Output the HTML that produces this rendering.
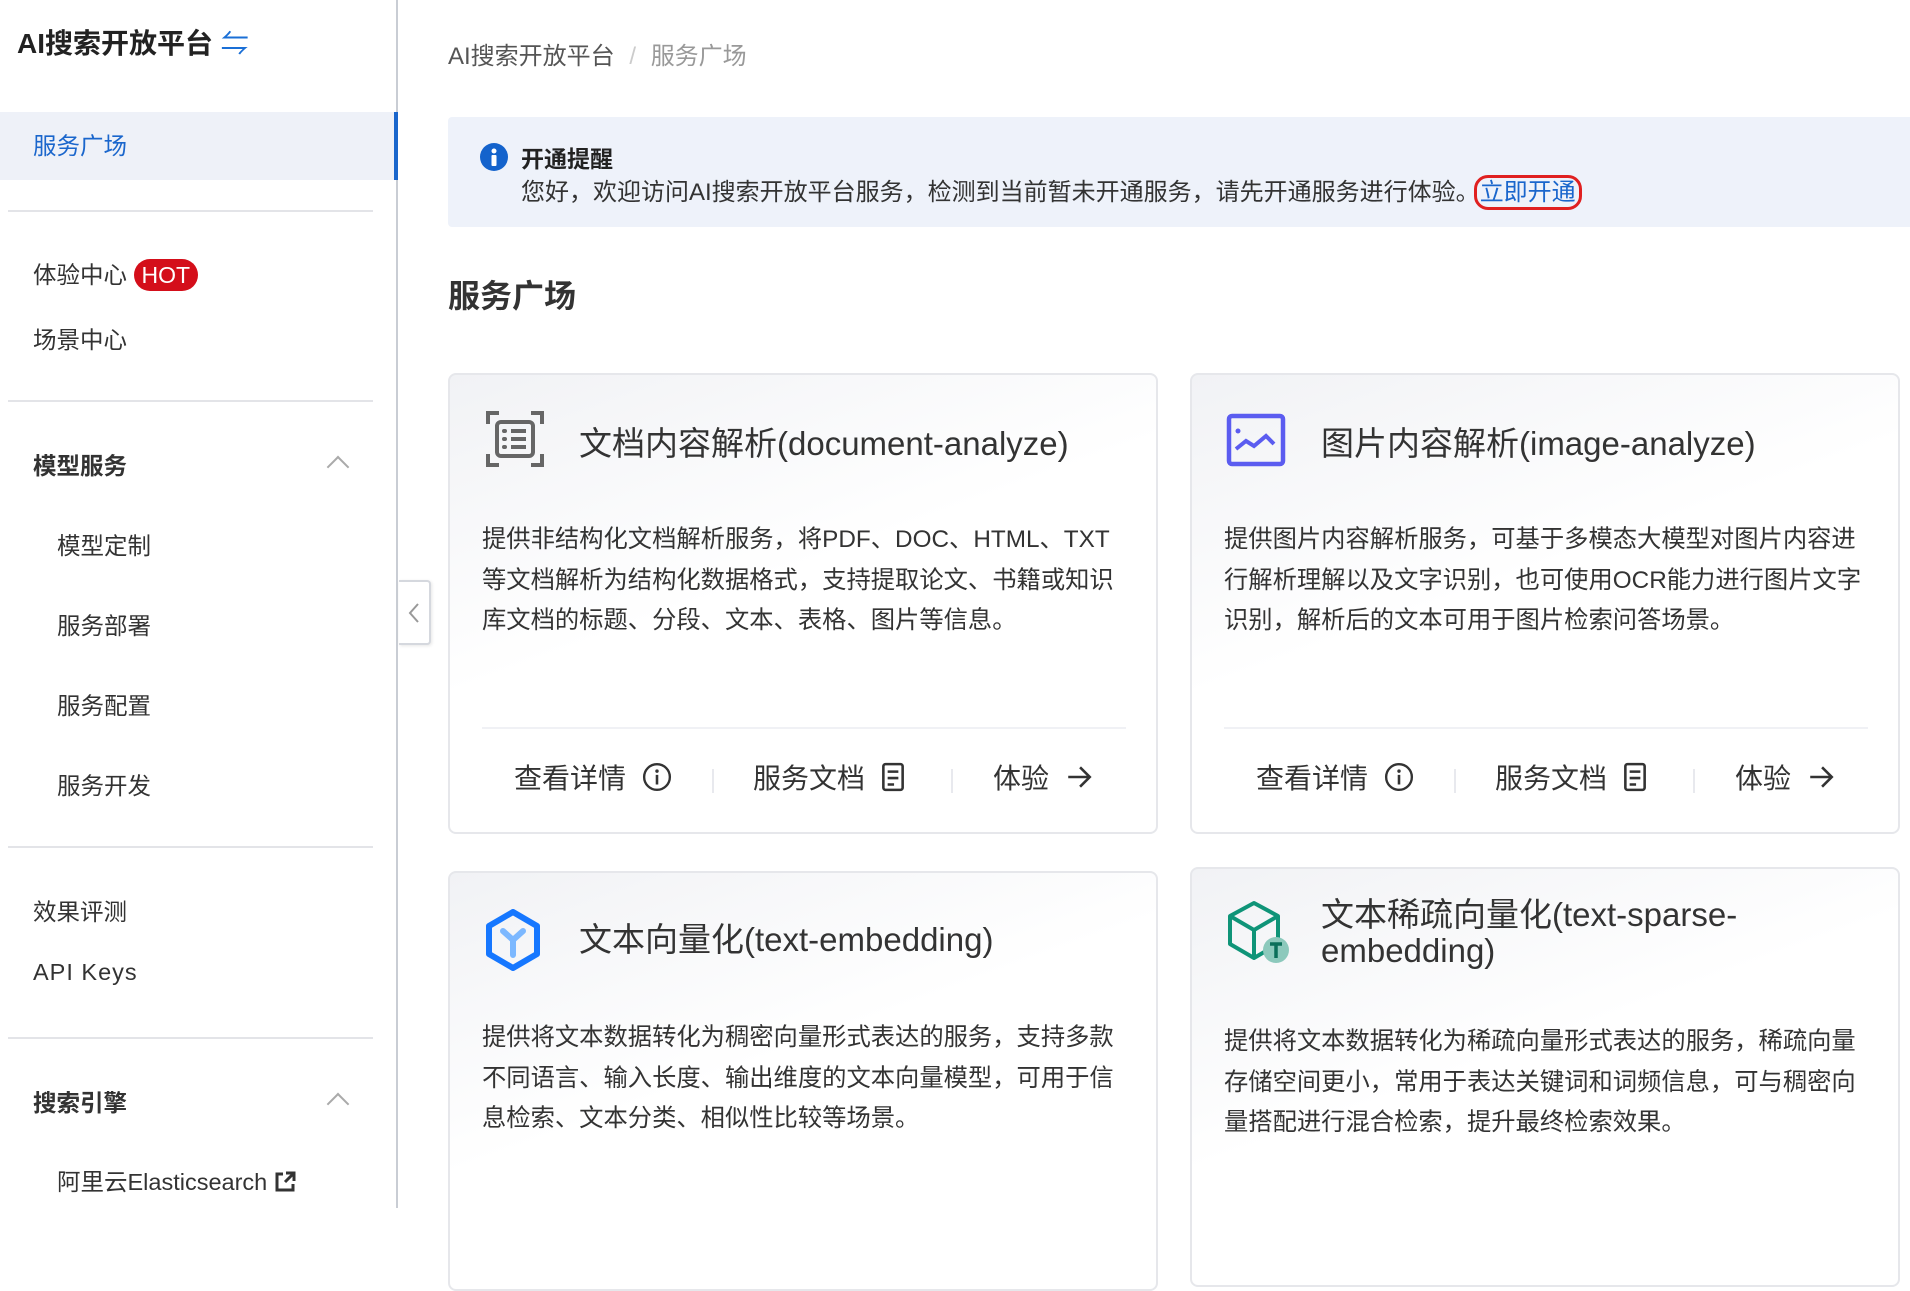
<!DOCTYPE html>
<html><head><meta charset="utf-8"><style>
*{margin:0;padding:0;box-sizing:border-box}
body{width:1910px;height:1208px;overflow:hidden;background:#fff;font-family:"Liberation Sans","Noto Sans CJK SC",sans-serif;color:#333;position:relative}
.a{position:absolute;white-space:nowrap}
.side{position:absolute;left:0;top:0;width:398px;height:1208px;border-right:2px solid #c9cdd4;background:#fff}
.hr{position:absolute;left:8px;width:365px;height:2px;background:#e3e4e8}
.nav{position:absolute;font-size:23.5px;color:#333}
.chev{position:absolute;width:16px;height:16px;border-left:2px solid #aaa;border-top:2px solid #aaa;transform:rotate(45deg)}
.card{position:absolute;border:2px solid #e6e7eb;border-radius:8px;background:linear-gradient(160deg,#f1f2f5 0%,#fff 45%,#fff 100%)}
.ct{position:absolute;left:129px;font-size:33px;color:#333;white-space:nowrap}
.cd{position:absolute;left:32px;font-size:24.3px;line-height:40.5px;color:#333;white-space:nowrap}
.cl{position:absolute;left:32px;right:30px;top:352px;height:2px;background:#f0f1f5}
.ft{position:absolute;top:382px;font-size:28px;color:#333;white-space:nowrap;display:flex;align-items:center;gap:16px}
.sep{position:absolute;top:394px;width:2px;height:24px;background:#e8e9ee}
</style></head><body>
<div class="side">
<div class="a" style="left:17px;top:22px;font-size:28px;font-weight:bold;color:#222">AI搜索开放平台 <span style="color:#1a6fd6;font-weight:normal">⇋</span></div>
<div style="position:absolute;left:0;top:112px;width:398px;height:68px;background:#eef1f8;border-right:4px solid #1a66cc"></div>
<div class="nav" style="left:33px;top:127px;color:#1a66cc">服务广场</div>
<div class="hr" style="top:210px"></div>
<div class="nav" style="left:33px;top:256px">体验中心 <span style="display:inline-block;background:#d40e1a;color:#fff;border-radius:16px;padding:1px 8px;font-size:23px;line-height:30px">HOT</span></div>
<div class="nav" style="left:33px;top:321px">场景中心</div>
<div class="hr" style="top:400px"></div>
<div class="nav" style="left:33px;top:447px;font-weight:bold">模型服务</div>
<div class="chev" style="left:330px;top:459px"></div>
<div class="nav" style="left:57px;top:527px">模型定制</div>
<div class="nav" style="left:57px;top:607px">服务部署</div>
<div class="nav" style="left:57px;top:687px">服务配置</div>
<div class="nav" style="left:57px;top:767px">服务开发</div>
<div class="hr" style="top:846px"></div>
<div class="nav" style="left:33px;top:893px">效果评测</div>
<div class="nav" style="left:33px;top:959px;letter-spacing:1px">API Keys</div>
<div class="hr" style="top:1037px"></div>
<div class="nav" style="left:33px;top:1084px;font-weight:bold">搜索引擎</div>
<div class="chev" style="left:330px;top:1096px"></div>
<div class="nav" style="left:57px;top:1163px">阿里云Elasticsearch <svg width="22" height="22" viewBox="0 0 22 22" style="vertical-align:-3px"><path d="M9 3H3v16h16v-6" fill="none" stroke="#333" stroke-width="3"/><path d="M12 2h8v8M20 2l-9 9" fill="none" stroke="#333" stroke-width="3"/></svg></div>
</div>
<div style="position:absolute;left:399px;top:580px;width:32px;height:65px;background:#fff;border:2px solid #d5d8de;border-left:none;border-radius:0 4px 4px 0;box-shadow:1px 1px 3px rgba(0,0,0,.1)"><svg width="30" height="60" viewBox="0 0 30 60"><path d="M19 22l-8 9 8 9" fill="none" stroke="#999" stroke-width="2"/></svg></div>

<div class="a" style="left:448px;top:36px;font-size:24px;color:#555">AI搜索开放平台 <span style="color:#ccc;margin:0 8px">/</span> <span style="color:#999">服务广场</span></div>

<div style="position:absolute;left:448px;top:117px;width:1462px;height:110px;background:#eef2fa;border-radius:4px 0 0 4px"></div>
<svg class="a" style="left:480px;top:143px" width="28" height="28" viewBox="0 0 28 28"><circle cx="14" cy="14" r="14" fill="#1463cc"/><circle cx="14" cy="8" r="2.5" fill="#fff"/><rect x="11.5" y="12" width="5" height="11" rx="1" fill="#fff"/></svg>
<div class="a" style="left:521px;top:140px;font-size:23px;font-weight:bold;color:#222">开通提醒</div>
<div class="a" style="left:521px;top:172px;font-size:24px;color:#333">您好，欢迎访问AI搜索开放平台服务，检测到当前暂未开通服务，请先开通服务进行体验。<span style="color:#1a66cc;border:3px solid #e02020;border-radius:14px;padding:1px 3px;margin-left:-6px">立即开通</span></div>

<div class="a" style="left:448px;top:271px;font-size:32px;font-weight:bold;color:#333">服务广场</div>

<div class="card" style="left:448px;top:373px;width:710px;height:461px">
<svg class="a" style="left:36px;top:35px" width="58" height="58" viewBox="0 0 58 58" fill="none" stroke="#666" stroke-width="4"><path d="M2 14V3h11M45 3h11v11M56 44v11H45M13 55H2V44"/><rect x="11" y="12" width="36" height="34" rx="4"/><path d="M25 21h15M25 29h15M25 37h15" stroke-width="4"/><path d="M18 21h1M18 29h1M18 37h1" stroke-width="4" stroke-linecap="round"/></svg>
<div class="ct" style="top:42px">文档内容解析(document-analyze)</div>
<div class="cd" style="top:145px">提供非结构化文档解析服务，将PDF、DOC、HTML、TXT<br>等文档解析为结构化数据格式，支持提取论文、书籍或知识<br>库文档的标题、分段、文本、表格、图片等信息。</div>
<div class="cl"></div>
<div class="ft" style="left:64px">查看详情 <svg width="30" height="30" viewBox="0 0 28 28"><circle cx="14" cy="14" r="12" fill="none" stroke="#333" stroke-width="2.2"/><circle cx="14" cy="8.5" r="1.6" fill="#333"/><rect x="12.8" y="12" width="2.4" height="9" fill="#333"/></svg></div>
<div class="sep" style="left:262px"></div>
<div class="ft" style="left:303px">服务文档 <svg width="24" height="30" viewBox="0 0 22 28" fill="none" stroke="#333" stroke-width="2.4"><rect x="2" y="2" width="18" height="24" rx="2"/><path d="M6 9h10M6 15h10M6 21h6"/></svg></div>
<div class="sep" style="left:501px"></div>
<div class="ft" style="left:543px">体验 <svg width="28" height="28" viewBox="0 0 26 26" fill="none" stroke="#333" stroke-width="2.4"><path d="M3 13h20M14 4l9 9-9 9"/></svg></div>
</div>

<div class="card" style="left:1190px;top:373px;width:710px;height:461px">
<svg class="a" style="left:34px;top:38px" width="60" height="54" viewBox="0 0 60 54" fill="none" stroke="#5b5cf0" stroke-width="4.5"><rect x="3" y="3" width="54" height="48" rx="3"/><circle cx="12" cy="18" r="2.5" fill="#5b5cf0" stroke="none"/><path d="M10 36l10-8 8 5 12-10 8 8" stroke-width="4"/></svg>
<div class="ct" style="top:42px">图片内容解析(image-analyze)</div>
<div class="cd" style="top:145px">提供图片内容解析服务，可基于多模态大模型对图片内容进<br>行解析理解以及文字识别，也可使用OCR能力进行图片文字<br>识别，解析后的文本可用于图片检索问答场景。</div>
<div class="cl"></div>
<div class="ft" style="left:64px">查看详情 <svg width="30" height="30" viewBox="0 0 28 28"><circle cx="14" cy="14" r="12" fill="none" stroke="#333" stroke-width="2.2"/><circle cx="14" cy="8.5" r="1.6" fill="#333"/><rect x="12.8" y="12" width="2.4" height="9" fill="#333"/></svg></div>
<div class="sep" style="left:262px"></div>
<div class="ft" style="left:303px">服务文档 <svg width="24" height="30" viewBox="0 0 22 28" fill="none" stroke="#333" stroke-width="2.4"><rect x="2" y="2" width="18" height="24" rx="2"/><path d="M6 9h10M6 15h10M6 21h6"/></svg></div>
<div class="sep" style="left:501px"></div>
<div class="ft" style="left:543px">体验 <svg width="28" height="28" viewBox="0 0 26 26" fill="none" stroke="#333" stroke-width="2.4"><path d="M3 13h20M14 4l9 9-9 9"/></svg></div>
</div>

<div class="card" style="left:448px;top:871px;width:710px;height:420px">
<svg class="a" style="left:34px;top:36px" width="58" height="62" viewBox="0 0 58 62"><path d="M29 3l24 14v28L29 59 5 45V17z" fill="none" stroke="#1677ff" stroke-width="6" stroke-linejoin="round"/><path d="M19 22l10 9 10-9M29 31v15" fill="none" stroke="#7cb8ff" stroke-width="6" stroke-linecap="round"/></svg>
<div class="ct" style="top:40px">文本向量化(text-embedding)</div>
<div class="cd" style="top:145px">提供将文本数据转化为稠密向量形式表达的服务，支持多款<br>不同语言、输入长度、输出维度的文本向量模型，可用于信<br>息检索、文本分类、相似性比较等场景。</div>
</div>

<div class="card" style="left:1190px;top:867px;width:710px;height:420px">
<svg class="a" style="left:32px;top:31px" width="68" height="68" viewBox="0 0 68 68" fill="none" stroke="#0f9478" stroke-width="4" stroke-linejoin="round"><path d="M30 3l24 13v28L30 58 6 44V16z"/><path d="M6 16l24 14 24-14M30 30v28"/><circle cx="52" cy="50" r="13" fill="#8cc9bc" stroke="none"/><path d="M46 44h12M52 44v14" stroke="#0b6f5a" stroke-width="3.5"/></svg>
<div class="ct" style="top:28px;line-height:36px">文本稀疏向量化(text-sparse-<br>embedding)</div>
<div class="cd" style="top:153px">提供将文本数据转化为稀疏向量形式表达的服务，稀疏向量<br>存储空间更小，常用于表达关键词和词频信息，可与稠密向<br>量搭配进行混合检索，提升最终检索效果。</div>
</div>
</body></html>
